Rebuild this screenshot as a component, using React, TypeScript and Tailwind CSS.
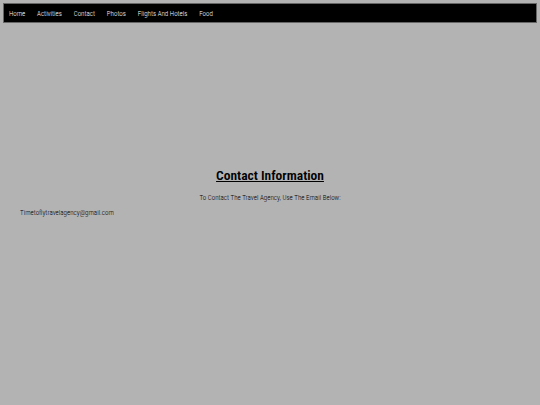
export default function App() {
  const links = ["Home", "Activities", "Contact", "Photos", "Flights And Hotels", "Food"];
  return (
    <div className="min-h-[405px] w-full bg-[#b3b3b3] pt-[3px] font-['Roboto_Condensed','Roboto',sans-serif] font-light [font-stretch:condensed]">
      <nav className="mx-[3px] flex h-[20px] items-center gap-[11.8px] border border-[#666] bg-black px-[5px] pt-[2px]">
        {links.map((l) => (
          <a key={l} className="text-[7px] text-white">
            {l}
          </a>
        ))}
      </nav>
      <div className="pt-[143px] text-center">
        <h1 className="text-[13.5px] font-semibold leading-[18px] text-black underline">Contact Information</h1>
        <p className="mt-[9px] text-[7px] text-black">To Contact The Travel Agency, Use The Email Below:</p>
      </div>
      <p className="mt-[4px] pl-[20px] text-[7px] text-black">Timetoflytravelagency@gmail.com</p>
    </div>
  );
}
